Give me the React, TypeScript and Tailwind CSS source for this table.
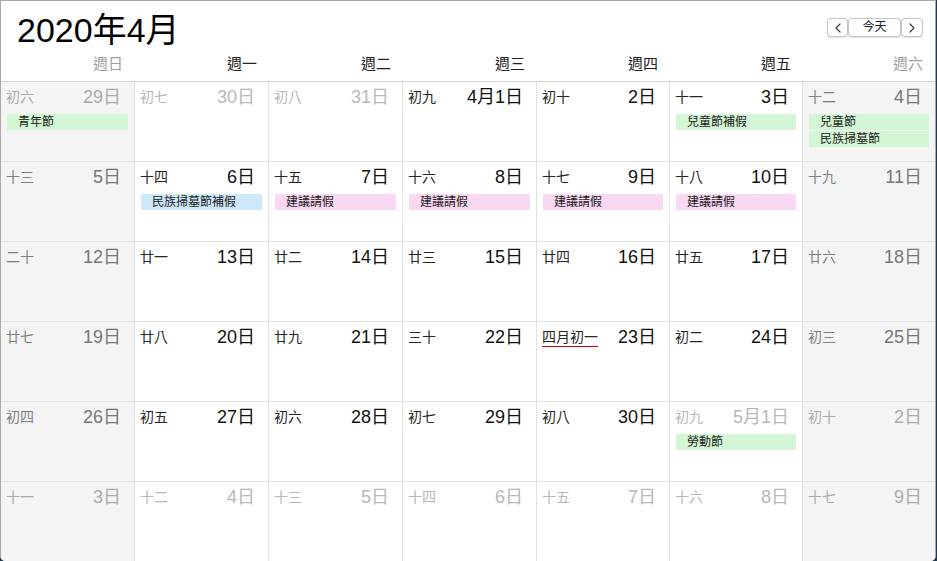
import React from "react";

type Ev = { t: string; c: "g" | "b" | "p" };
type Day = { l: string; n: string; other?: boolean; ev?: Ev[]; mark?: boolean };

const weeks: Day[][] = [
  [
    { l: "初六", n: "29日", other: true, ev: [{ t: "青年節", c: "g" }] },
    { l: "初七", n: "30日", other: true },
    { l: "初八", n: "31日", other: true },
    { l: "初九", n: "4月1日" },
    { l: "初十", n: "2日" },
    { l: "十一", n: "3日", ev: [{ t: "兒童節補假", c: "g" }] },
    { l: "十二", n: "4日", ev: [{ t: "兒童節", c: "g" }, { t: "民族掃墓節", c: "g" }] },
  ],
  [
    { l: "十三", n: "5日" },
    { l: "十四", n: "6日", ev: [{ t: "民族掃墓節補假", c: "b" }] },
    { l: "十五", n: "7日", ev: [{ t: "建議請假", c: "p" }] },
    { l: "十六", n: "8日", ev: [{ t: "建議請假", c: "p" }] },
    { l: "十七", n: "9日", ev: [{ t: "建議請假", c: "p" }] },
    { l: "十八", n: "10日", ev: [{ t: "建議請假", c: "p" }] },
    { l: "十九", n: "11日" },
  ],
  [
    { l: "二十", n: "12日" },
    { l: "廿一", n: "13日" },
    { l: "廿二", n: "14日" },
    { l: "廿三", n: "15日" },
    { l: "廿四", n: "16日" },
    { l: "廿五", n: "17日" },
    { l: "廿六", n: "18日" },
  ],
  [
    { l: "廿七", n: "19日" },
    { l: "廿八", n: "20日" },
    { l: "廿九", n: "21日" },
    { l: "三十", n: "22日" },
    { l: "四月初一", n: "23日", mark: true },
    { l: "初二", n: "24日" },
    { l: "初三", n: "25日" },
  ],
  [
    { l: "初四", n: "26日" },
    { l: "初五", n: "27日" },
    { l: "初六", n: "28日" },
    { l: "初七", n: "29日" },
    { l: "初八", n: "30日" },
    { l: "初九", n: "5月1日", other: true, ev: [{ t: "勞動節", c: "g" }] },
    { l: "初十", n: "2日", other: true },
  ],
  [
    { l: "十一", n: "3日", other: true },
    { l: "十二", n: "4日", other: true },
    { l: "十三", n: "5日", other: true },
    { l: "十四", n: "6日", other: true },
    { l: "十五", n: "7日", other: true },
    { l: "十六", n: "8日", other: true },
    { l: "十七", n: "9日", other: true },
  ],
];

const weekdays = ["週日", "週一", "週二", "週三", "週四", "週五", "週六"];

const evBg: Record<Ev["c"], string> = {
  g: "bg-[#d3f6d4]",
  b: "bg-[#cde8fb]",
  p: "bg-[#f8d8f3]",
};

const cols = "grid grid-cols-[134px_134px_134px_134px_133px_133px_132px]";

function Cell({ d, col, lastCol, lastRow }: { d: Day; col: number; lastCol: boolean; lastRow: boolean }) {
  const weekend = col === 0 || col === 6;
  let lc = "text-[#262626]";
  let nc = "text-[#111111]";
  if (d.other) {
    lc = weekend ? "text-[#ababab]" : "text-[#b8b8b8]";
    nc = weekend ? "text-[#ababab]" : "text-[#b8b8b8]";
  } else if (weekend) {
    lc = "text-[#808080]";
    nc = "text-[#777777]";
  }
  return (
    <div
      className={`h-[80px] ${weekend ? "bg-[#f4f4f4]" : "bg-white"} ${lastCol ? "" : "border-r"} ${
        lastRow ? "" : "border-b"
      } border-[#e1e1e1] flex flex-col`}
    >
      <div className="h-[20px] mt-[5px] flex items-center justify-between pl-[5px] pr-[13px]">
        <span
          className={`text-[14px] leading-[20px] ${lc} ${
            d.mark ? "underline decoration-[#cc0000] decoration-1 underline-offset-[4px]" : ""
          }`}
        >
          {d.l}
        </span>
        <span className={`text-[18px] leading-[20px] ${nc}`}>{d.n}</span>
      </div>
      {d.ev && (
        <div className="mt-[7px] px-[6px] flex flex-col gap-[1px]">
          {d.ev.map((e, i) => (
            <div key={i} className={`${evBg[e.c]} h-[16px] pl-[11px] text-[12px] leading-[16px] text-[#1a1a1a]`}>
              {e.t}
            </div>
          ))}
        </div>
      )}
    </div>
  );
}

function Chevron({ dir }: { dir: "l" | "r" }) {
  return (
    <svg width="6" height="10" viewBox="0 0 6 10" fill="none">
      <path
        d={dir === "l" ? "M5 1 L1 5 L5 9" : "M1 1 L5 5 L1 9"}
        stroke="#3a3a3a"
        strokeWidth="1.2"
        strokeLinecap="round"
        strokeLinejoin="round"
      />
    </svg>
  );
}

export default function App() {
  return (
    <div className="w-[937px] h-[561px] bg-[#1d3a4e] overflow-hidden font-['Liberation_Sans','Noto_Sans_CJK_TC',sans-serif]">
      <div className="w-[936px] h-[561px] bg-white border-l border-t border-r border-[#a9a9a9] rounded-b-[5px] overflow-hidden flex flex-col">
        <div className="h-[81px] shrink-0 border-b border-[#d6d6d6] flex flex-col">
          <div className="h-[53px] flex items-start justify-between pl-[16px] pr-[12px] pt-[9px]">
            <div className="text-[34px] leading-[40px] text-black">2020年4月</div>
            <div className="mt-[8px] flex gap-0">
              <button className="w-[21px] h-[19px] flex items-center justify-center bg-white border border-[#c6c6c6] rounded-[4px] shadow-[0_0.5px_1px_rgba(0,0,0,0.12)]">
                <Chevron dir="l" />
              </button>
              <button className="w-[53px] h-[19px] flex items-center justify-center bg-white border border-[#c6c6c6] rounded-[4px] text-[12px] leading-[17px] text-[#1a1a1a] shadow-[0_0.5px_1px_rgba(0,0,0,0.12)]">
                今天
              </button>
              <button className="w-[22px] h-[19px] flex items-center justify-center bg-white border border-[#c6c6c6] rounded-[4px] shadow-[0_0.5px_1px_rgba(0,0,0,0.12)]">
                <Chevron dir="r" />
              </button>
            </div>
          </div>
          <div className={`${cols} h-[20px]`}>
            {weekdays.map((w, i) => (
              <div
                key={w}
                className={`text-right pr-[12px] text-[15px] leading-[20px] ${
                  i === 0 || i === 6 ? "text-[#9f9f9f]" : "text-[#222222]"
                }`}
              >
                {w}
              </div>
            ))}
          </div>
        </div>
        <div className="flex flex-col">
          {weeks.map((row, r) => (
            <div key={r} className={cols}>
              {row.map((d, c) => (
                <Cell key={c} d={d} col={c} lastCol={c === 6} lastRow={r === 5} />
              ))}
            </div>
          ))}
        </div>
      </div>
    </div>
  );
}
